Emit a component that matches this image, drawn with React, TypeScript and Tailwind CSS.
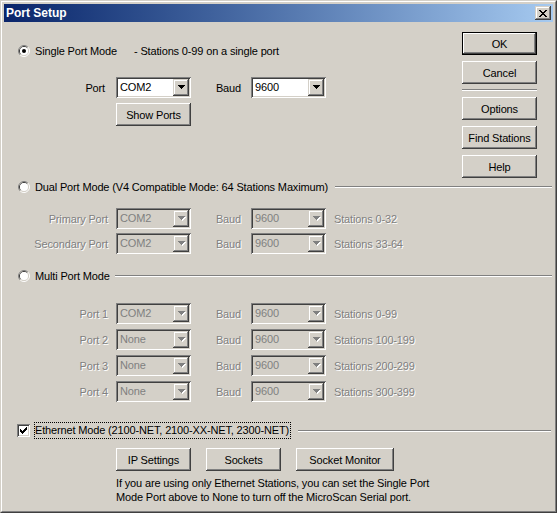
import type { ReactNode } from "react"

const raised =
  "shadow-[inset_-1px_-1px_0_#404040,inset_1px_1px_0_#fff,inset_-2px_-2px_0_#808080,inset_2px_2px_0_#d4d0c8]"
const arrowRaised =
  "shadow-[inset_-1px_-1px_0_#404040,inset_1px_1px_0_#d4d0c8,inset_-2px_-2px_0_#808080,inset_2px_2px_0_#fff]"
const sunken =
  "shadow-[inset_1px_1px_0_#808080,inset_-1px_-1px_0_#fff,inset_2px_2px_0_#404040,inset_-2px_-2px_0_#d4d0c8]"
const etched = "text-[#808080] [text-shadow:1px_1px_0_#fff]"

function Arrow({ disabled }: { disabled?: boolean }) {
  const rows = [
    [0, 0, 7],
    [1, 1, 5],
    [2, 2, 3],
    [3, 3, 1],
  ]
  return (
    <svg width="8" height="5" viewBox="0 0 8 5" shapeRendering="crispEdges">
      {disabled &&
        rows.map(([x, y, w]) => (
          <rect key={"s" + y} x={x + 1} y={y + 1} width={w} height={1} fill="#fff" />
        ))}
      {rows.map(([x, y, w]) => (
        <rect key={y} x={x} y={y} width={w} height={1} fill={disabled ? "#808080" : "#000"} />
      ))}
    </svg>
  )
}

function Combo({ value, disabled }: { value: string; disabled?: boolean }) {
  return (
    <div
      className={`w-[75px] h-[21px] flex p-[2px] shrink-0 ${sunken} ${disabled ? "bg-[#d4d0c8]" : "bg-white"}`}
    >
      <div className={`flex-1 pl-[2px] leading-[17px] ${disabled ? "text-[#808080]" : ""}`}>
        {value}
      </div>
      <div className={`w-[16px] h-[17px] bg-[#d4d0c8] flex items-center justify-center pl-[1px] ${arrowRaised}`}>
        <Arrow disabled={disabled} />
      </div>
    </div>
  )
}

function Btn({
  children,
  w = "w-[75px]",
  def,
}: {
  children: ReactNode
  w?: string
  def?: boolean
}) {
  return (
    <div
      className={`${w} h-[23px] shrink-0 flex items-center justify-center bg-[#d4d0c8] ${raised} ${def ? "border border-black" : ""}`}
    >
      {children}
    </div>
  )
}

function Radio({ checked }: { checked?: boolean }) {
  return (
    <svg width="12" height="12" viewBox="0 0 12 12" className="shrink-0">
      <path d="M2.11 9.89A5.5 5.5 0 0 1 9.89 2.11" fill="none" stroke="#808080" />
      <path d="M9.89 2.11A5.5 5.5 0 0 1 2.11 9.89" fill="none" stroke="#fff" />
      <path d="M2.82 9.18A4.5 4.5 0 0 1 9.18 2.82" fill="none" stroke="#404040" />
      <path d="M9.18 2.82A4.5 4.5 0 0 1 2.82 9.18" fill="none" stroke="#d4d0c8" />
      <circle cx="6" cy="6" r="4" fill="#fff" />
      {checked && <circle cx="6" cy="6" r="2" fill="#000" />}
    </svg>
  )
}

function Checkbox() {
  return (
    <div className={`w-[13px] h-[13px] bg-white shrink-0 flex items-center justify-center ${sunken}`}>
      <svg width="7" height="7" viewBox="0 0 7 7" shapeRendering="crispEdges">
        <rect x="0" y="2" width="1" height="3" fill="#000" />
        <rect x="1" y="3" width="1" height="3" fill="#000" />
        <rect x="2" y="4" width="1" height="3" fill="#000" />
        <rect x="3" y="3" width="1" height="3" fill="#000" />
        <rect x="4" y="2" width="1" height="3" fill="#000" />
        <rect x="5" y="1" width="1" height="3" fill="#000" />
        <rect x="6" y="0" width="1" height="3" fill="#000" />
      </svg>
    </div>
  )
}

function Line({ className = "" }: { className?: string }) {
  return <div className={`flex-1 h-[2px] border-t border-t-[#808080] border-b border-b-white ${className}`} />
}

function PortRow({
  label,
  port,
  stations,
  mt,
}: {
  label: string
  port: string
  stations: string
  mt: string
}) {
  return (
    <div className={`flex items-center h-[21px] ${mt}`}>
      <div className={`w-[104px] text-right ${etched}`}>{label}</div>
      <div className="ml-[8px]">
        <Combo value={port} disabled />
      </div>
      <div className={`w-[50px] text-right ${etched}`}>Baud</div>
      <div className="ml-[10px]">
        <Combo value="9600" disabled />
      </div>
      <div className={`ml-[8px] ${etched}`}>{stations}</div>
    </div>
  )
}

export default function App() {
  return (
    <div className="w-[557px] h-[513px] bg-[#d4d0c8] border border-t-[#d4d0c8] border-l-[#d4d0c8] border-r-[#404040] border-b-[#404040] text-[11px] leading-[14px] tracking-[-0.15px] text-black font-['Liberation_Sans',Arial,sans-serif] select-none">
      <div className="h-full border border-t-white border-l-white border-r-[#808080] border-b-[#808080] p-[2px] flex flex-col">
        <div className="h-[18px] shrink-0 flex items-center bg-gradient-to-r from-[#0a246a] to-[#a6caf0] pl-[2px] pr-[2px]">
          <span className="text-white font-bold text-[12px] tracking-normal flex-1">Port Setup</span>
          <div className={`w-[16px] h-[14px] bg-[#d4d0c8] flex items-center justify-center ${arrowRaised}`}>
            <svg width="8" height="7" viewBox="0 0 8 7" shapeRendering="crispEdges">
              <path
                d="M0 0h2v1H0zM6 0h2v1H6zM1 1h2v1H1zM5 1h2v1H5zM2 2h4v1H2zM3 3h2v1H3zM2 4h4v1H2zM1 5h2v1H1zM5 5h2v1H5zM0 6h2v1H0zM6 6h2v1H6z"
                fill="#000"
              />
            </svg>
          </div>
        </div>

        <div className="flex-1 flex flex-col">
          {/* single port + right buttons */}
          <div className="flex">
            <div className="flex-1 flex flex-col">
              <div className="mt-[23px] h-[12px] flex items-center pl-[14px] gap-[5px]">
                <Radio checked />
                <span>Single Port Mode</span>
                <span className="ml-[12px]">- Stations 0-99 on a single port</span>
              </div>
              <div className="mt-[20px] flex items-center h-[21px]">
                <div className="w-[101px] text-right">Port</div>
                <div className="ml-[11px]">
                  <Combo value="COM2" />
                </div>
                <div className="w-[50px] text-right">Baud</div>
                <div className="ml-[10px]">
                  <Combo value="9600" />
                </div>
              </div>
              <div className="mt-[5px] ml-[112px]">
                <Btn>Show Ports</Btn>
              </div>
            </div>
            <div className="w-[75px] mr-[16px] pt-[10px] flex flex-col">
              <Btn def>OK</Btn>
              <div className="mt-[6px]">
                <Btn>Cancel</Btn>
              </div>
              <div className="mt-[5px] h-[2px] border-t border-t-[#808080] border-b border-b-white" />
              <div className="mt-[6px] flex flex-col gap-[6px]">
                <Btn>Options</Btn>
                <Btn>Find Stations</Btn>
                <Btn>Help</Btn>
              </div>
            </div>
          </div>

          {/* dual port */}
          <div className="mt-[3px] h-[12px] flex items-center pl-[14px] pr-[1px]">
            <Radio />
            <span className="ml-[5px]">Dual Port Mode (V4 Compatible Mode: 64 Stations Maximum)</span>
            <Line className="ml-[7px]" />
          </div>
          <PortRow label="Primary Port" port="COM2" stations="Stations 0-32" mt="mt-[15px]" />
          <PortRow label="Secondary Port" port="COM2" stations="Stations 33-64" mt="mt-[4px]" />

          {/* multi port */}
          <div className="mt-[16px] h-[12px] flex items-center pl-[14px] pr-[1px]">
            <Radio />
            <span className="ml-[5px]">Multi Port Mode</span>
            <Line className="ml-[5px]" />
          </div>
          <PortRow label="Port 1" port="COM2" stations="Stations 0-99" mt="mt-[21px]" />
          <PortRow label="Port 2" port="None" stations="Stations 100-199" mt="mt-[5px]" />
          <PortRow label="Port 3" port="None" stations="Stations 200-299" mt="mt-[5px]" />
          <PortRow label="Port 4" port="None" stations="Stations 300-399" mt="mt-[5px]" />

          {/* ethernet */}
          <div className="mt-[20px] h-[17px] flex items-center pl-[13px] pr-[2px]">
            <Checkbox />
            <span className="ml-[4px] border border-dotted border-black h-[17px] leading-[15px] pr-[1px]">
              Ethernet Mode (2100-NET, 2100-XX-NET, 2300-NET)
            </span>
            <Line className="ml-[7px]" />
          </div>
          <div className="mt-[9px] ml-[112px] flex gap-[15px]">
            <Btn>IP Settings</Btn>
            <Btn>Sockets</Btn>
            <Btn w="w-[98px]">Socket Monitor</Btn>
          </div>
          <div className="mt-[5px] ml-[112px]">
            If you are using only Ethernet Stations, you can set the Single Port
            <br />
            Mode Port above to None to turn off the MicroScan Serial port.
          </div>
        </div>
      </div>
    </div>
  )
}
